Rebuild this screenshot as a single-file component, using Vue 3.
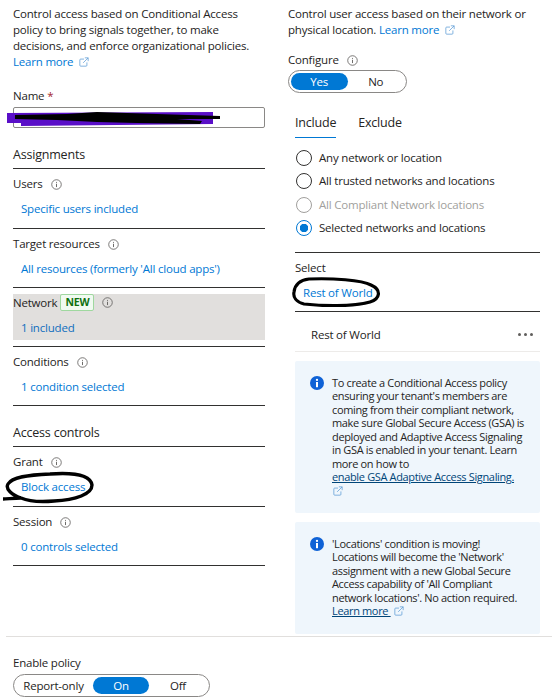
<template>
  <div class="page">
    <div class="columns">
      <section class="col-left">
        <p class="intro">
          Control access based on Conditional Access policy to bring signals together, to make decisions, and enforce organizational policies.
          <a class="link">Learn more <svg class="ext" viewBox="0 0 12 12"><use href="#ext-icon" /></svg></a>
        </p>

        <label class="name-label">Name <span class="req">*</span></label>
        <div class="name-input">
          <svg class="scribble-name" viewBox="0 0 220 18" aria-hidden="true">
            <path d="M0 4 L206 3 L206 15 L14 17 L14 14 L0 14 Z" fill="#5a0fc8" />
            <path d="M8 6 L60 5 L90 3 L150 5 L213 7 L213 10 L170 10 L195 12 L193 15 L130 14 L90 13 L50 11 L8 10 Z" fill="#000" />
          </svg>
        </div>

        <h2 class="section-title">Assignments</h2>
        <div v-for="row in assignments" :key="row.label" class="row" :class="{ active: row.active }">
          <div class="row-inner">
            <div class="row-label">
              {{ row.label }}
              <span v-if="row.active" class="badge">NEW</span>
              <svg class="info" viewBox="0 0 12 12"><use href="#info-icon" /></svg>
            </div>
            <a class="row-link">{{ row.value }}</a>
          </div>
        </div>

        <h2 class="section-title">Access controls</h2>
        <div v-for="row in controls" :key="row.label" class="row">
          <div class="row-inner">
            <div class="row-label">
              {{ row.label }}
              <svg class="info" viewBox="0 0 12 12"><use href="#info-icon" /></svg>
            </div>
            <a class="row-link">
              {{ row.value }}
              <svg v-if="row.circled" class="scribble-block" viewBox="0 0 92 34" aria-hidden="true">
                <path d="M1 28 C5 28 12 27 19 27 C10 24 3 18 6 13 C10 6 26 4 48 3 C62 2 88 1 90 14 C90 23 74 29 52 30 C40 31 26 30 19 27" fill="none" stroke="#000" stroke-width="3.4" />
              </svg>
            </a>
          </div>
        </div>
      </section>

      <section class="col-right">
        <p class="intro">
          Control user access based on their network or physical location.
          <a class="link">Learn more <svg class="ext" viewBox="0 0 12 12"><use href="#ext-icon" /></svg></a>
        </p>

        <div class="configure">
          Configure
          <svg class="info" viewBox="0 0 12 12"><use href="#info-icon" /></svg>
        </div>
        <div class="toggle yes-no">
          <span class="opt on">Yes</span>
          <span class="opt">No</span>
        </div>

        <div class="inset">
          <div class="tabs">
            <span class="tab selected">Include</span>
            <span class="tab">Exclude</span>
          </div>

          <ul class="radios">
            <li v-for="r in radios" :key="r.label" class="radio" :class="{ disabled: r.disabled, checked: r.checked }">
              <span class="dot"></span>{{ r.label }}
            </li>
          </ul>

          <div class="select-block">
            <div class="row-label">Select</div>
            <a class="row-link">
              Rest of World
              <svg class="scribble-world" viewBox="0 0 92 30" aria-hidden="true">
                <path d="M2 15 C3 7 8 3 17 2 C40 1 70 3 79 8 C90 13 88 22 78 25 C60 30 30 29 12 27 C4 25 1 20 2 15 Z" fill="none" stroke="#000" stroke-width="3.2" />
              </svg>
            </a>
          </div>

          <div class="world-row">
            <span>Rest of World</span>
            <span class="more"><i></i><i></i><i></i></span>
          </div>

          <div class="notice first-notice">
            <svg class="notice-icon" viewBox="0 0 14 14"><use href="#solid-info" /></svg>
            <div class="notice-body">
              <p>
                To create a Conditional Access policy ensuring your tenant's members are coming from their compliant network, make sure Global Secure Access (GSA) is deployed and Adaptive Access Signaling in GSA is enabled in your tenant. Learn more on how to<br />
                <a class="dark-link">enable GSA Adaptive Access Signaling.</a>
              </p>
              <svg class="ext notice-ext" viewBox="0 0 12 12"><use href="#ext-icon" /></svg>
            </div>
          </div>

          <div class="notice second-notice">
            <svg class="notice-icon" viewBox="0 0 14 14"><use href="#solid-info" /></svg>
            <p>
              'Locations' condition is moving! Locations will become the 'Network' assignment with a new Global Secure Access capability of 'All Compliant network locations'. No action required.<br />
              <a class="dark-link">Learn more&nbsp;</a>
              <svg class="ext" viewBox="0 0 12 12"><use href="#ext-icon" /></svg>
            </p>
          </div>
        </div>
      </section>
    </div>

    <footer class="footer">
      <div class="enable-label">Enable policy</div>
      <div class="toggle policy">
        <span class="opt">Report-only</span>
        <span class="opt on">On</span>
        <span class="opt">Off</span>
      </div>
    </footer>

    <svg width="0" height="0" class="defs" aria-hidden="true">
      <symbol id="ext-icon" viewBox="0 0 12 12">
        <path d="M6 2.5H2a1 1 0 0 0-1 1V10a1 1 0 0 0 1 1h6.5a1 1 0 0 0 1-1V6.5M7 1h4v4M11 1 5 7" fill="none" stroke="currentColor" stroke-width="0.9" />
      </symbol>
      <symbol id="info-icon" viewBox="0 0 12 12">
        <circle cx="6" cy="6" r="5.2" fill="none" stroke="currentColor" stroke-width="0.9" />
        <path d="M6 5.2v3.6M6 3.2v1" stroke="currentColor" stroke-width="1" />
      </symbol>
      <symbol id="solid-info" viewBox="0 0 14 14">
        <circle cx="7" cy="7" r="7" fill="#0f62d6" />
        <rect x="6" y="6" width="2" height="5.2" fill="#fff" />
        <circle cx="7" cy="3.9" r="1.15" fill="#fff" />
      </symbol>
    </svg>
  </div>
</template>

<script setup>
const assignments = [
  { label: 'Users', value: 'Specific users included' },
  { label: 'Target resources', value: "All resources (formerly 'All cloud apps')" },
  { label: 'Network', value: '1 included', active: true },
  { label: 'Conditions', value: '1 condition selected' }
]

const controls = [
  { label: 'Grant', value: 'Block access', circled: true },
  { label: 'Session', value: '0 controls selected' }
]

const radios = [
  { label: 'Any network or location' },
  { label: 'All trusted networks and locations' },
  { label: 'All Compliant Network locations', disabled: true },
  { label: 'Selected networks and locations', checked: true }
]
</script>

<style>
html, body {
  background: #fff;
  overflow: hidden;
}
</style>

<style scoped>
.page {
  width: 552px;
  height: 699px;
  overflow: hidden;
  font-family: "Open Sans", "Noto Sans", sans-serif;
  font-size: 11.5px;
  letter-spacing: -0.2px;
  line-height: 16px;
  color: #252423;
  position: relative;
}

.defs {
  position: absolute;
}

.columns {
  display: grid;
  grid-template-columns: 252px 252px;
  column-gap: 23px;
  padding: 6px 0 0 13px;
  height: 636px;
  box-sizing: border-box;
}

.col-right {
  min-width: 0;
}

.intro {
  margin: 0;
}

.link {
  color: #0078d4;
}

.ext {
  width: 10px;
  height: 10px;
  color: #5a9bd5;
  margin-left: 3px;
  vertical-align: -1px;
}

.name-label {
  display: block;
  margin-top: 18px;
}

.req {
  color: #a4262c;
}

.name-input {
  position: relative;
  height: 21px;
  margin-top: 3px;
  box-sizing: border-box;
  border: 1px solid #8a8886;
  border-radius: 2px;
}

.scribble-name {
  position: absolute;
  left: -7px;
  top: 1px;
  width: 220px;
  height: 18px;
}

.section-title {
  margin: 0;
  padding: 19px 0 5px;
  font-size: 12.5px;
  line-height: 16px;
  font-weight: 400;
  border-bottom: 1px solid #323130;
}

.row {
  height: 59px;
  box-sizing: border-box;
  border-bottom: 1px solid #323130;
}

.section-title + .row {
  height: 60px;
}

.row-inner {
  padding-top: 6px;
}

.row.active {
  padding-top: 6px;
}

.row.active .row-inner {
  background: #e1dfdd;
  padding: 0;
  height: 46px;
}

.row.active .row-label {
  height: 17px;
}

.row.active .row-link {
  margin-top: 9px;
  color: #106ebe;
}

.row-label {
  display: flex;
  align-items: center;
  gap: 6px;
  height: 18px;
}

.info {
  width: 11px;
  height: 11px;
  color: #605e5c;
  margin-left: 2px;
}

.badge {
  border: 1px solid #9fd89f;
  border-radius: 2px;
  background: #f1faf1;
  color: #0e700e;
  font-size: 10.5px;
  font-weight: 700;
  line-height: 15px;
  padding: 0 4px;
  margin-left: -3px;
}

.row-link {
  position: relative;
  display: block;
  width: fit-content;
  margin: 8px 0 0 8px;
  color: #0078d4;
}

.scribble-block {
  position: absolute;
  left: -19px;
  top: -8px;
  width: 92px;
  height: 34px;
}

.configure {
  display: flex;
  align-items: center;
  gap: 6px;
  margin-top: 14px;
}

.toggle {
  box-sizing: border-box;
  border: 1px solid #8a8886;
  border-radius: 12px;
  padding: 2px;
  height: 23px;
  align-items: center;
  text-align: center;
}

.yes-no {
  display: flex;
  width: 119px;
  margin-top: 2px;
}

.yes-no .opt {
  flex: 1;
}

.opt {
  line-height: 17px;
}

.opt.on {
  background: #0078d4;
  color: #fff;
  border-radius: 9px;
}

.inset {
  padding-left: 7px;
  width: 245px;
}

.tabs {
  display: flex;
  gap: 22px;
  margin-top: 22px;
}

.tab {
  padding-bottom: 7px;
  font-size: 12.5px;
}

.tab.selected {
  border-bottom: 1px solid #0078d4;
  padding-bottom: 6px;
}

.radios {
  list-style: none;
  margin: 12px 0 0;
  padding: 0;
  display: flex;
  flex-direction: column;
  gap: 7.33px;
}

.radio {
  display: flex;
  align-items: center;
  gap: 7px;
}

.dot {
  width: 16px;
  height: 16px;
  box-sizing: border-box;
  border: 1px solid #323130;
  border-radius: 50%;
  flex: none;
  margin-left: 1px;
}

.radio.disabled {
  color: #a19f9d;
}

.radio.disabled .dot {
  border-color: #a19f9d;
}

.radio.checked .dot {
  border-color: #0078d4;
  background: radial-gradient(circle, #0078d4 0 4px, #fff 4.5px);
}

.select-block {
  margin-top: 16px;
  padding: 6px 0 10px;
  border-top: 1px solid #323130;
  border-bottom: 1px solid #323130;
}

.scribble-world {
  position: absolute;
  left: -11px;
  top: -8px;
  width: 92px;
  height: 30px;
}

.world-row {
  display: flex;
  justify-content: space-between;
  align-items: center;
  height: 40px;
  box-sizing: border-box;
  padding: 8px 7px 0 16px;
  border-bottom: 1px solid #edebe9;
}

.more {
  display: flex;
  gap: 3px;
  margin-top: -2px;
}

.more i {
  width: 3px;
  height: 3px;
  background: #605e5c;
  border-radius: 50%;
}

.notice {
  display: flex;
  gap: 8px;
  background: #eff6fc;
  border-radius: 2px;
  padding: 15px 12px 0 15px;
  margin-top: 9px;
  box-sizing: border-box;
  font-size: 11px;
  letter-spacing: -0.35px;
  line-height: 13.5px;
}

.notice p {
  margin: 0;
}

.first-notice {
  height: 152px;
}

.second-notice {
  height: 112px;
}

.notice-icon {
  width: 14px;
  height: 14px;
  flex: none;
}

.notice-ext {
  display: block;
  margin: 2px 0 0 1px;
}

.dark-link {
  color: #004578;
  text-decoration: underline;
}

.footer {
  margin-left: 6px;
  padding: 18px 0 0 7px;
  border-top: 1px solid #e1dfdd;
}

.enable-label {
  margin-bottom: 3px;
}

.policy {
  width: 197px;
  display: grid;
  grid-template-columns: 75px 56px 1fr;
  column-gap: 2px;
}

.policy .opt:last-child {
  padding-right: 2px;
}
</style>
